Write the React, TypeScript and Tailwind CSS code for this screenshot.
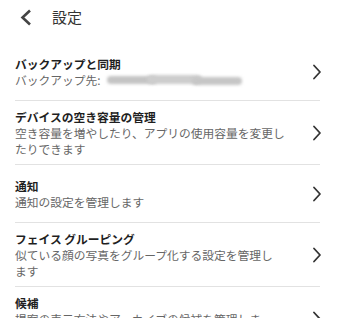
import { ReactNode } from 'react';

function Chevron() {
  return (
    <svg width="10" height="16" viewBox="0 0 10 16" className="shrink-0 -mr-[2px]">
      <path d="M2 1.5 L8 8 L2 14.5" fill="none" stroke="#333" strokeWidth="1.8" strokeLinecap="round" strokeLinejoin="round" />
    </svg>
  );
}

function Item({ title, children, last }: { title: string; children: ReactNode; last?: boolean }) {
  return (
    <div className={`flex items-center min-h-[58px] py-[7px] ml-[15px] mr-[20px] ${last ? '' : 'border-b border-[#e2e2e2]'}`}>
      <div className="flex-1 min-w-0">
        <div className="text-[11.75px] leading-[17px] font-bold text-[#1f1f1f]">{title}</div>
        <div className="text-[11.75px] leading-[16px] text-[#666]">{children}</div>
      </div>
      <Chevron />
    </div>
  );
}

export default function App() {
  return (
    <div
      className="w-[340px] h-[318px] overflow-hidden bg-white"
      style={{ fontFamily: '"Noto Sans CJK JP", "Noto Sans", sans-serif' }}
    >
      <header className="h-[43px] flex items-center pl-[19px] pb-[8px]">
        <svg width="14" height="17" viewBox="0 0 14 17">
          <path d="M11 1.5 L3.5 8.5 L11 15.5" fill="none" stroke="#444" strokeWidth="2.6" strokeLinejoin="miter" />
        </svg>
        <span className="ml-[19px] text-[15px] text-[#333]">設定</span>
      </header>

      <Item title="バックアップと同期">
        <span className="inline-flex items-center">
          バックアップ先:
          <span className="relative inline-block ml-[6px] w-[137px] h-[12px]">
            <span className="absolute left-0 top-[2px] w-[50px] h-[8px] rounded-full bg-[#c4c4c4] blur-[1.5px]" />
            <span className="absolute left-[40px] top-[1px] w-[55px] h-[9px] rounded-full bg-[#cdcdcd] blur-[1.5px]" />
            <span className="absolute left-[85px] top-[3px] w-[50px] h-[8px] rounded-full bg-[#c6c6c6] blur-[1.5px]" />
          </span>
        </span>
      </Item>

      <Item title="デバイスの空き容量の管理">
        空き容量を増やしたり、アプリの使用容量を変更し
        <br />
        たりできます
      </Item>

      <Item title="通知">通知の設定を管理します</Item>

      <Item title="フェイス グルーピング">
        似ている顔の写真をグループ化する設定を管理し
        <br />
        ます
      </Item>

      <Item title="候補" last>
        提案の表示方法やアーカイブの候補を管理しま
        <br />
        す
      </Item>
    </div>
  );
}
